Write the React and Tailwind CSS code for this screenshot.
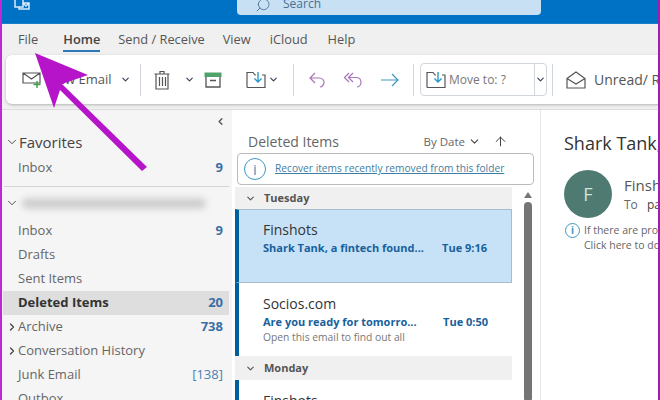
import { ChevronDown, ChevronRight, ChevronLeft, ArrowUp, Search } from 'lucide-react';

const font = { fontFamily: '"Open Sans", "Noto Sans", sans-serif' };

function Chev({ className = '' }) {
  return <ChevronDown size={11} strokeWidth={2.5} className={`text-gray-700 shrink-0 ${className}`} />;
}

function Sep({ className = '' }) {
  return <div className={`w-px h-8 bg-gray-300 shrink-0 ${className}`} />;
}

function FolderMove({ className = '' }) {
  return (
    <svg width="20" height="18" viewBox="0 0 20 18" fill="none" className={`shrink-0 ${className}`}>
      <path d="M1 16.500V1.500h6l2 2.500h1M16 4h3v12.500H1" stroke="#555" strokeWidth="1.200" />
      <path d="M12 1v10M8.500 7.500l3.500 3.500 3.500-3.500" stroke="#2b9ac9" strokeWidth="1.400" />
    </svg>
  );
}

function Ribbon() {
  return (
    <div className="h-[49px] ml-[6px] bg-white rounded-l-md shadow-[0_1px_3px_rgba(0,0,0,0.25)] flex items-center text-[13px] text-[#555] overflow-hidden">
      <svg width="20" height="18" viewBox="0 0 20 18" fill="none" className="ml-[16px] mt-[1px] shrink-0">
        <path d="M1 2h17v10H1zM1 2l8.500 6L18 2" stroke="#555" strokeWidth="1.200" />
        <path d="M15 10v7M11.500 13.500h7" stroke="#3ca04a" strokeWidth="1.400" />
      </svg>
      <span className="ml-[6px] w-[72px] shrink-0 whitespace-nowrap">New Email</span>
      <Chev />
      <Sep className="ml-[9px]" />
      <svg width="19" height="20" viewBox="0 0 19 20" fill="none" className="ml-[12px] shrink-0">
        <path d="M3 4v15h12V4M1.500 4h15M7 4V1.500h4V4M6.500 7v9M9.500 7v9M12.500 7v9" stroke="#555" strokeWidth="1.200" />
      </svg>
      <Chev className="ml-[12px]" />
      <svg width="18" height="16" viewBox="0 0 18 16" fill="none" className="ml-[9px] shrink-0">
        <rect x="1" y="1" width="16" height="3.500" fill="#4fa36a" stroke="#4fa36a" />
        <path d="M2 5v10h14V5M6 8.500h6" stroke="#555" strokeWidth="1.300" />
      </svg>
      <FolderMove className="ml-[24px]" />
      <Chev className="ml-[2px]" />
      <Sep className="ml-[14px]" />
      <svg width="18" height="18" viewBox="0 0 18 18" fill="none" className="ml-[14px] shrink-0">
        <path d="M7 2L2 7l5 5M2 7h9c3.500 0 5 2.500 5 4.500S14 16 12 16" stroke="#a873b8" strokeWidth="1.200" />
      </svg>
      <svg width="20" height="18" viewBox="0 0 20 18" fill="none" className="ml-[17px] shrink-0">
        <path d="M6 2L1.500 6.500 6 11M10 2L5.500 6.500 10 11M5.500 6.500H13c3 0 5 2 5 4.500S16.500 16 14 16" stroke="#a873b8" strokeWidth="1.200" />
      </svg>
      <svg width="20" height="14" viewBox="0 0 20 14" fill="none" className="ml-[17px] shrink-0">
        <path d="M1 7h17M12 1l6 6-6 6" stroke="#3d9ac4" strokeWidth="1.200" />
      </svg>
      <Sep className="ml-[13px]" />
      <div className="ml-[6px] h-[33px] w-[127px] shrink-0 border border-gray-300 rounded flex items-center">
        <FolderMove className="ml-[5px]" />
        <span className="ml-[3px] text-[12px] text-[#777] w-[85px] whitespace-nowrap">Move to: ?</span>
        <div className="h-full border-l border-gray-300 flex-1 flex items-center justify-center"><Chev /></div>
      </div>
      <Sep className="ml-[5px]" />
      <svg width="20" height="18" viewBox="0 0 20 18" fill="none" className="ml-[13px] shrink-0">
        <path d="M1 7.500L10 1l9 6.500V17H1zM1 7.500L10 13l9-5.500" stroke="#555" strokeWidth="1.200" />
      </svg>
      <span className="ml-[8px] text-[14px] whitespace-nowrap shrink-0">Unread/ Read</span>
    </div>
  );
}

function Folder({ name, count, chevron, selected, bracket }) {
  return (
    <div className={`h-[24px] flex items-center text-[13px] ${selected ? 'bg-[#dedede] font-bold text-[#333]' : 'text-[#666]'}`}>
      <div className="w-[13px] pl-[3px] shrink-0">
        {chevron && <ChevronRight size={12} strokeWidth={2.5} className="text-[#444]" />}
      </div>
      <span className="ml-[2px] flex-1 whitespace-nowrap">{name}</span>
      {count && (
        <span className={`pr-[6px] ${bracket ? 'font-normal text-[#4d7fb0]' : 'font-bold text-[#3b6fa5]'}`}>{count}</span>
      )}
    </div>
  );
}

function Sidebar() {
  return (
    <div className="w-[232px] shrink-0 bg-[#f5f5f5] pl-[3px] pr-[3px]">
      <div className="h-[22px] flex justify-end items-center pr-[3px]">
        <ChevronLeft size={11} strokeWidth={3} className="text-[#555]" />
      </div>
      <div className="h-[20px] flex items-center">
        <ChevronDown size={14} strokeWidth={1.6} className="ml-[2px] text-[#444]" />
        <span className="text-[15px] text-[#444]">Favorites</span>
      </div>
      <div className="mt-[4px]"><Folder name="Inbox" count="9" /></div>
      <div className="mt-[6px] h-px bg-[#d5d5d5] ml-px" />
      <div className="h-[32px] flex items-center">
        <ChevronDown size={14} strokeWidth={1.6} className="ml-[2px] text-[#444]" />
        <div className="ml-[3px] w-[184px] h-[11px] rounded-full bg-[#cfcfcf] blur-[3px]" />
      </div>
      <Folder name="Inbox" count="9" />
      <Folder name="Drafts" />
      <Folder name="Sent Items" />
      <Folder name="Deleted Items" count="20" selected />
      <Folder name="Archive" count="738" chevron />
      <Folder name="Conversation History" chevron />
      <Folder name="Junk Email" count="[138]" bracket />
      <Folder name="Outbox" />
    </div>
  );
}

function DayHeader({ label, className = '' }) {
  return (
    <div className={`bg-[#f0f0f0] flex items-center text-[11px] font-bold text-[#555] ${className}`}>
      <ChevronDown size={11} strokeWidth={2.5} className="ml-[10px] text-[#555]" />
      <span className="ml-[8px]">{label}</span>
    </div>
  );
}

function Mail({ from, subject, time, preview, selected, className = '' }) {
  return (
    <div className={`border-l-[4px] border-[#00609c] pl-[24px] pr-[24px] ${selected ? 'pt-[9px] bg-[#c7e2f6] border-y border-r border-y-[#a9bccb] border-r-[#a9bccb]' : 'pt-[10px] bg-white'} ${className}`}>
      <div className="text-[14px] leading-[22px] text-[#333]">{from}</div>
      <div className="flex justify-between text-[11px] leading-[13px] font-bold text-[#17609c] whitespace-nowrap">
        <span>{subject}</span>
        <span>{time}</span>
      </div>
      {preview && <div className="text-[10.300px] leading-[18px] text-[#777] whitespace-nowrap">{preview}</div>}
    </div>
  );
}

function MailList() {
  return (
    <div className="w-[309px] shrink-0 bg-white pl-[3px] border-r border-[#e6e6e6]">
      <div className="h-[43px] flex items-center pl-[13px] pr-[32px] pt-[20px] text-[#666]">
        <span className="flex-1 text-[14px]">Deleted Items</span>
        <span className="text-[11.500px]">By Date</span>
        <ChevronDown size={13} strokeWidth={2} className="ml-[3px] text-[#444]" />
        <ArrowUp size={15} strokeWidth={1.6} className="ml-[12px] text-[#444]" />
      </div>
      <div className="ml-[2px] mr-[6px] h-[32px] border border-[#bbb] rounded flex items-center">
        <div className="ml-[6px] w-[22px] h-[22px] rounded-full border-[1.5px] border-[#3f97bf] flex items-center justify-center text-[15px] text-[#3f97bf]">i</div>
        <span className="ml-[9px] text-[10.200px] text-[#3f7ea3] underline whitespace-nowrap">Recover items recently removed from this folder</span>
      </div>
      <div className="flex mt-[2px]">
        <div className="w-[277px] shrink-0">
          <DayHeader label="Tuesday" className="h-[22px]" />
          <Mail from="Finshots" subject="Shark Tank, a fintech found..." time="Tue 9:16" selected className="h-[74px]" />
          <Mail from="Socios.com" subject="Are you ready for tomorro..." time="Tue 0:50" preview="Open this email to find out all" className="h-[73px]" />
          <DayHeader label="Monday" className="h-[24px]" />
          <Mail from="Finshots" className="h-[74px]" />
        </div>
        <div className="ml-[12px] w-[8px] flex flex-col items-center">
          <div className="mt-[5px] w-0 h-0 border-x-[4px] border-x-transparent border-b-[6px] border-b-[#777]" />
          <div className="mt-[4px] w-[8px] h-[200px] rounded-full bg-[#757575]" />
        </div>
      </div>
    </div>
  );
}

function Reading() {
  return (
    <div className="flex-1 min-w-0 bg-white pl-[23px] overflow-hidden whitespace-nowrap">
      <div className="pt-[20px] text-[18px] leading-[26px] text-[#333]">Shark Tank, a fintech</div>
      <div className="mt-[14px] flex">
        <div className="w-[48px] h-[48px] rounded-full bg-[#4f7a72] flex items-center justify-center text-[#d5e3df] text-[18px] shrink-0">F</div>
        <div className="ml-[12px] pt-[4px]">
          <div className="text-[15px] leading-[22px] text-[#555]">Finshots</div>
          <div className="text-[12px] leading-[18px] text-[#666]">To <span className="ml-[6px] text-[#444]">parth</span></div>
        </div>
      </div>
      <div className="mt-[5px] flex text-[10.500px] leading-[15px] text-[#666]">
        <div className="ml-px w-[15px] h-[15px] rounded-full border-[1.5px] border-[#3f97bf] flex items-center justify-center text-[10px] font-bold text-[#3f97bf] shrink-0">i</div>
        <div className="ml-[4px]">
          <div>If there are problems</div>
          <div>Click here to download</div>
        </div>
      </div>
    </div>
  );
}

export default function App() {
  return (
    <div style={font} className="relative w-[660px] h-[400px] overflow-hidden bg-[#f0f0f0]">
      <div className="h-[24px] bg-[#0072c6] flex items-end border-b border-[#1a7fc9]">
        <svg width="16" height="10" viewBox="0 0 16 10" fill="none" className="ml-[14px] mb-[13px]">
          <path d="M1 0v7h8V0M9 3h6v6H5V7M9 3L12 6l3-3" stroke="#d8ecfa" strokeWidth="1.500" />
        </svg>
        <div className="ml-[207px] w-[304px] h-[16px] mb-[8px] bg-[#c7e0f4] rounded-b flex items-end text-[#4a6f90] text-[12px] leading-[16px]">
          <Search size={16} strokeWidth={1.3} className="ml-[18px] mb-[2px] -scale-x-100" />
          <span className="ml-[12px] mb-[3px]">Search</span>
        </div>
      </div>
      <div className="h-[31px] flex items-center pl-[18px] text-[12.800px] text-[#555] whitespace-nowrap">
        <span>File</span>
        <span className="ml-[25px] relative font-semibold text-[#444]">
          Home
          <span className="absolute left-0 right-0 -bottom-[3px] h-[2px] bg-[#2b79b8]" />
        </span>
        <span className="ml-[18px]">Send / Receive</span>
        <span className="ml-[18px]">View</span>
        <span className="ml-[19px]">iCloud</span>
        <span className="ml-[20px]">Help</span>
      </div>
      <Ribbon />
      <div className="h-[6px] border-b border-[#dcdcdc]" />
      <div className="flex h-[290px]">
        <Sidebar />
        <MailList />
        <Reading />
      </div>
      <div className="absolute inset-y-0 left-0 w-[2px] bg-[#c026d3]" />
      <div className="absolute inset-y-0 right-0 w-[2px] bg-[#a21caf]" />
      <svg width="160" height="130" viewBox="0 0 160 130" className="absolute left-0 top-[50px]">
        <path d="M35 3L88 25 62 34 147 117 142 121 60 40 54 58Z" fill="#b514c9" />
      </svg>
    </div>
  );
}
